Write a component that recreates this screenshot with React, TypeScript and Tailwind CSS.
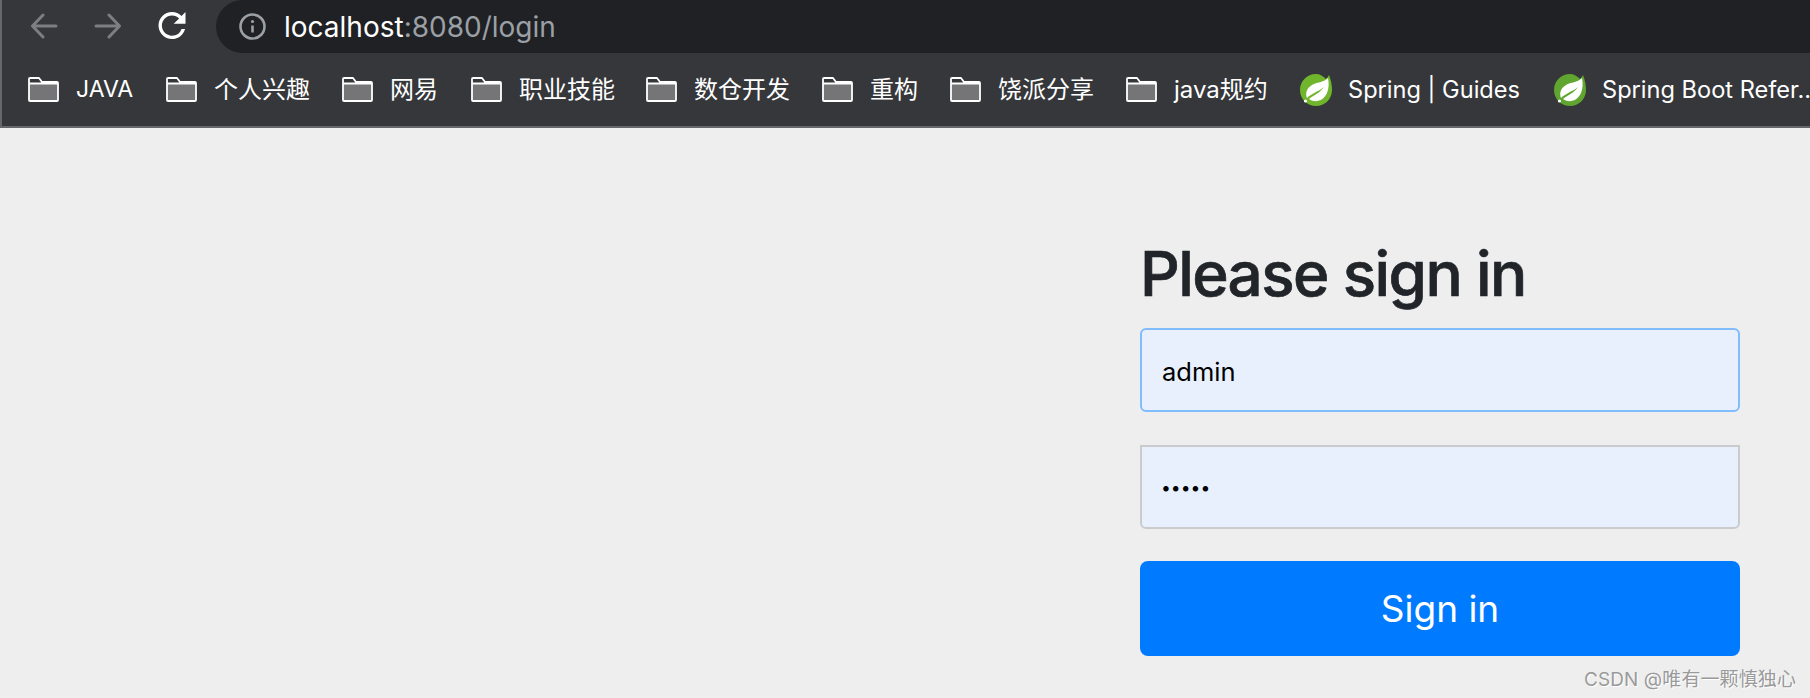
import React from 'react';

const UI_FONT = "font-['Inter','Noto_Sans_CJK_SC',sans-serif]";

const bookmarks = [
  { label: 'JAVA', width: 'w-[57px] text-[23px]' },
  { label: '个人兴趣', width: 'w-[95px]' },
  { label: '网易', width: 'w-[48px]' },
  { label: '职业技能', width: 'w-[94px]' },
  { label: '数仓开发', width: 'w-[95px]' },
  { label: '重构', width: 'w-[47px]' },
  { label: '饶派分享', width: 'w-[95px]' },
  { label: 'java规约', width: 'w-[93px]' },
];

const FolderIcon = () => (
  <svg width="31" height="25" viewBox="0 0 31 25" className="shrink-0">
    <path d="M1 7h29v16a1 1 0 0 1-1 1H2a1 1 0 0 1-1-1z" fill="#757577" />
    <path
      d="M1 2a1 1 0 0 1 1-1h9l3 4h15a1 1 0 0 1 1 1v17a1 1 0 0 1-1 1H2a1 1 0 0 1-1-1zM1 6.5h29"
      fill="none"
      stroke="#fff"
      strokeWidth="1.8"
      strokeLinejoin="round"
    />
  </svg>
);

const SpringIcon = ({ color = '#70b52c' }: { color?: string }) => (
  <svg width="32" height="33" viewBox="0 0 32 33" className="shrink-0">
    <path
      d="M29 2c-1 2-2 3-3 4C23 3 20 1 16 1 7 1 0 8 0 17s7 16 16 16 16-7 16-16c0-5-1-10-3-15z"
      fill={color}
    />
    <path
      d="M28 5C23 10 17 9 12 12 7 15 5 20 7 25 12 20 18 19 24 14 20 20 14 22 9 26 16 31 24 27 27 20 29 15 29 10 28 5z"
      fill="#fff"
    />
    <circle cx="5.5" cy="28" r="1.6" fill="#fff" />
  </svg>
);

const Toolbar = () => (
  <header className={`h-[128px] shrink-0 bg-[#36373b] border-b-2 border-l-2 border-[#66676a] ${UI_FONT}`}>
    <div className="flex h-[53px] items-center">
      <div className="flex w-[214px] shrink-0 items-center pl-[28px] pb-[2px]">
        <svg width="28" height="26" viewBox="0 0 28 26" fill="none" stroke="#7d7e80" strokeWidth="3" strokeLinecap="round" strokeLinejoin="round">
          <path d="M26 13H3M13 2 2.5 13 13 24" />
        </svg>
        <svg width="28" height="26" viewBox="0 0 28 26" fill="none" stroke="#7d7e80" strokeWidth="3" strokeLinecap="round" strokeLinejoin="round" className="ml-[36px]">
          <path d="M2 13h23M15 2l10.5 11L15 24" />
        </svg>
        <svg width="28" height="27" viewBox="4 4 16 16" fill="#fff" className="ml-[36px]">
          <path d="M17.65 6.35A7.958 7.958 0 0 0 12 4c-4.42 0-7.99 3.58-7.99 8s3.57 8 7.99 8c3.73 0 6.84-2.55 7.73-6h-2.08A5.99 5.99 0 0 1 12 18c-3.31 0-6-2.69-6-6s2.69-6 6-6c1.66 0 3.14.69 4.22 1.78L13 11h7V4l-2.35 2.35z" />
        </svg>
      </div>
      <div className="flex h-full flex-1 items-center rounded-l-[27px] bg-[#202124] pl-[23px]">
        <svg width="27" height="27" viewBox="0 0 27 27" fill="none" className="shrink-0">
          <circle cx="13.5" cy="13.5" r="12" stroke="#9aa0a6" strokeWidth="2.6" />
          <path d="M13.5 12.5v7" stroke="#9aa0a6" strokeWidth="2.6" />
          <circle cx="13.5" cy="8.5" r="1.6" fill="#9aa0a6" />
        </svg>
        <span className="ml-[18px] text-[28px] leading-none text-white">
          localhost<span className="text-[#9aa0a6]">:8080/login</span>
        </span>
      </div>
    </div>
    <nav className="flex h-[73px] items-center gap-[33px] overflow-hidden whitespace-nowrap pl-[26px] text-[24px] text-white">
      {bookmarks.map((b) => (
        <div key={b.label} className="flex shrink-0 items-center gap-[17px]">
          <FolderIcon />
          <span className={b.width}>{b.label}</span>
        </div>
      ))}
      <div className="flex shrink-0 items-center gap-[16px] text-[23.6px]">
        <SpringIcon />
        <span>Spring | Guides</span>
      </div>
      <div className="ml-[1px] flex shrink-0 items-center gap-[16px] text-[23.6px]">
        <SpringIcon color="#5fa52f" />
        <span>Spring Boot Refer..</span>
      </div>
    </nav>
  </header>
);

export default function App() {
  return (
    <div className={`relative flex h-[698px] w-[1810px] flex-col overflow-hidden bg-[#eeeeee] ${UI_FONT}`}>
      <Toolbar />
      <main className="flex flex-1 justify-end pr-[70px]">
        <form className="flex w-[600px] flex-col pt-[109px]">
          <h1 className="h-[91px] text-[62px] leading-[74px] font-medium tracking-[-1.6px] text-[#212529] [-webkit-text-stroke:0.7px_#212529]">Please sign in</h1>
          <input
            readOnly
            defaultValue="admin"
            className="h-[84px] rounded-[6px] border-2 border-[#80bdff] bg-[#e8f0fe] px-[20px] pt-[3px] text-[25.5px] text-black outline-none"
          />
          <input
            readOnly
            type="password"
            defaultValue="admin"
            className="mt-[33px] h-[84px] rounded-b-[6px] border-2 border-[#cbcbcd] bg-[#e8f0fe] px-[19px] text-[17.5px] text-black outline-none"
          />
          <button type="button" className="mt-[32px] h-[95px] rounded-[8px] bg-[#007bff] text-[37px] text-white">
            Sign in
          </button>
        </form>
      </main>
      <span className="absolute right-[14px] bottom-[9px] text-[19px] leading-none tracking-[0.1px] text-[#9a9a9a] [text-shadow:1px_1px_0_#fff]">
        CSDN @唯有一颗慎独心
      </span>
    </div>
  );
}
